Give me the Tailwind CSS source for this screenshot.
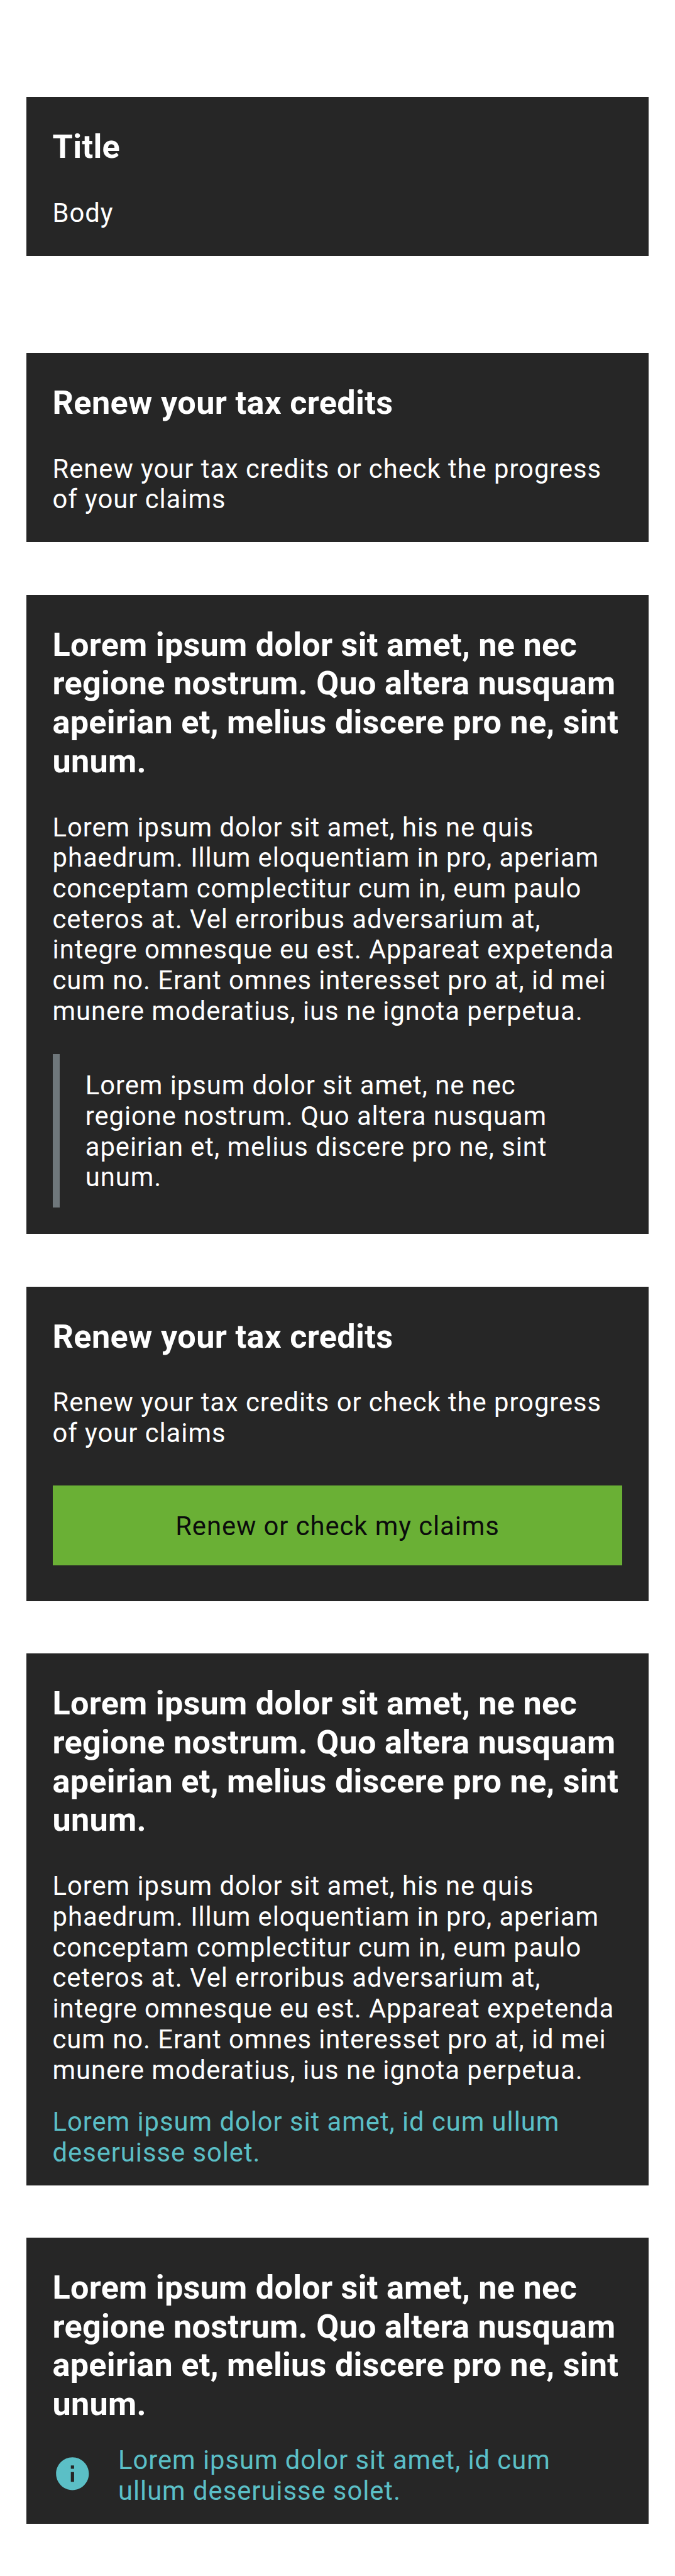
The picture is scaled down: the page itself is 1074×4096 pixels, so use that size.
<!DOCTYPE html>
<html lang="en">
<head>
<meta charset="utf-8">
<title>Cards</title>
<script src="https://cdn.jsdelivr.net/npm/@tailwindcss/browser@4"></script>
</head>
<body class="bg-white">
<main class="flex h-[4096px] w-[1074px] flex-col overflow-hidden px-[41.77px] pt-[154.14px] font-[Roboto,sans-serif] text-[41.77px] leading-[48.73px] tracking-[0.955px] text-white">

  <section class="bg-[#262626] px-[41.77px] pt-[49px] pb-[43px]">
    <h2 class="text-[52.21px] leading-[61.65px] font-bold tracking-[0.36px]">Title</h2>
    <p class="mt-[50.21px]">Body</p>
  </section>

  <section class="mt-[154.14px] bg-[#262626] px-[41.77px] pt-[49px] pb-[43px]">
    <h2 class="text-[52.21px] leading-[61.65px] font-bold tracking-[0.36px]">Renew your tax credits</h2>
    <p class="mt-[50.21px]">Renew your tax credits or check the progress of your claims</p>
  </section>

  <section class="mt-[83.53px] bg-[#262626] px-[41.77px] pt-[49px] pb-[41.77px]">
    <h2 class="text-[52.21px] leading-[61.65px] font-bold tracking-[0.26px]">Lorem ipsum dolor sit amet, ne nec regione nostrum. Quo altera nusquam apeirian et, melius discere pro ne, sint unum.</h2>
    <p class="mt-[50.21px]">Lorem ipsum dolor sit amet, his ne quis phaedrum. Illum eloquentiam in pro, aperiam conceptam complectitur cum in, eum paulo ceteros at. Vel erroribus adversarium at, integre omnesque eu est. Appareat expetenda cum no. Erant omnes interesset pro at, id mei munere moderatius, ius ne ignota perpetua.</p>
    <blockquote class="mt-[43px] flex">
      <div class="w-[11px] shrink-0 bg-[#6f777b]"></div>
      <p class="pt-[26.6px] pr-[20px] pb-[23.13px] pl-[41.2px]">Lorem ipsum dolor sit amet, ne nec regione nostrum. Quo altera nusquam apeirian et, melius discere pro ne, sint unum.</p>
    </blockquote>
  </section>

  <section class="mt-[83.53px] bg-[#262626] px-[41.77px] pt-[49px] pb-[56.68px]">
    <h2 class="text-[52.21px] leading-[61.65px] font-bold tracking-[0.36px]">Renew your tax credits</h2>
    <p class="mt-[50.21px]">Renew your tax credits or check the progress of your claims</p>
    <button class="mt-[57.91px] block w-full bg-[#6ab035] pt-[40.77px] pb-[37.79px] text-center tracking-[0.93px] text-[#0b0c0c]">Renew or check my claims</button>
  </section>

  <section class="mt-[83.53px] bg-[#262626] px-[41.77px] pt-[49px] pb-[27.08px]">
    <h2 class="text-[52.21px] leading-[61.65px] font-bold tracking-[0.26px]">Lorem ipsum dolor sit amet, ne nec regione nostrum. Quo altera nusquam apeirian et, melius discere pro ne, sint unum.</h2>
    <p class="mt-[50.21px]">Lorem ipsum dolor sit amet, his ne quis phaedrum. Illum eloquentiam in pro, aperiam conceptam complectitur cum in, eum paulo ceteros at. Vel erroribus adversarium at, integre omnesque eu est. Appareat expetenda cum no. Erant omnes interesset pro at, id mei munere moderatius, ius ne ignota perpetua.</p>
    <p class="mt-[33.81px] text-[#5bbfc6]">Lorem ipsum dolor sit amet, id cum ullum deseruisse solet.</p>
  </section>

  <section class="mt-[83.53px] bg-[#262626] px-[41.77px] pt-[49px] pb-[27.08px]">
    <h2 class="text-[52.21px] leading-[61.65px] font-bold tracking-[0.26px]">Lorem ipsum dolor sit amet, ne nec regione nostrum. Quo altera nusquam apeirian et, melius discere pro ne, sint unum.</h2>
    <div class="mt-[34.28px] flex items-start gap-[41.77px] text-[#5bbfc6]">
      <svg class="mt-[14.1px] size-[62.65px] shrink-0" viewBox="0 0 24 24" fill="currentColor"><path d="M12 2C6.48 2 2 6.48 2 12s4.48 10 10 10 10-4.48 10-10S17.52 2 12 2zm1 15h-2v-6h2v6zm0-8h-2V7h2v2z"/></svg>
      <p class="pr-[41.77px]">Lorem ipsum dolor sit amet, id cum ullum deseruisse solet.</p>
    </div>
  </section>

</main>
</body>
</html>
